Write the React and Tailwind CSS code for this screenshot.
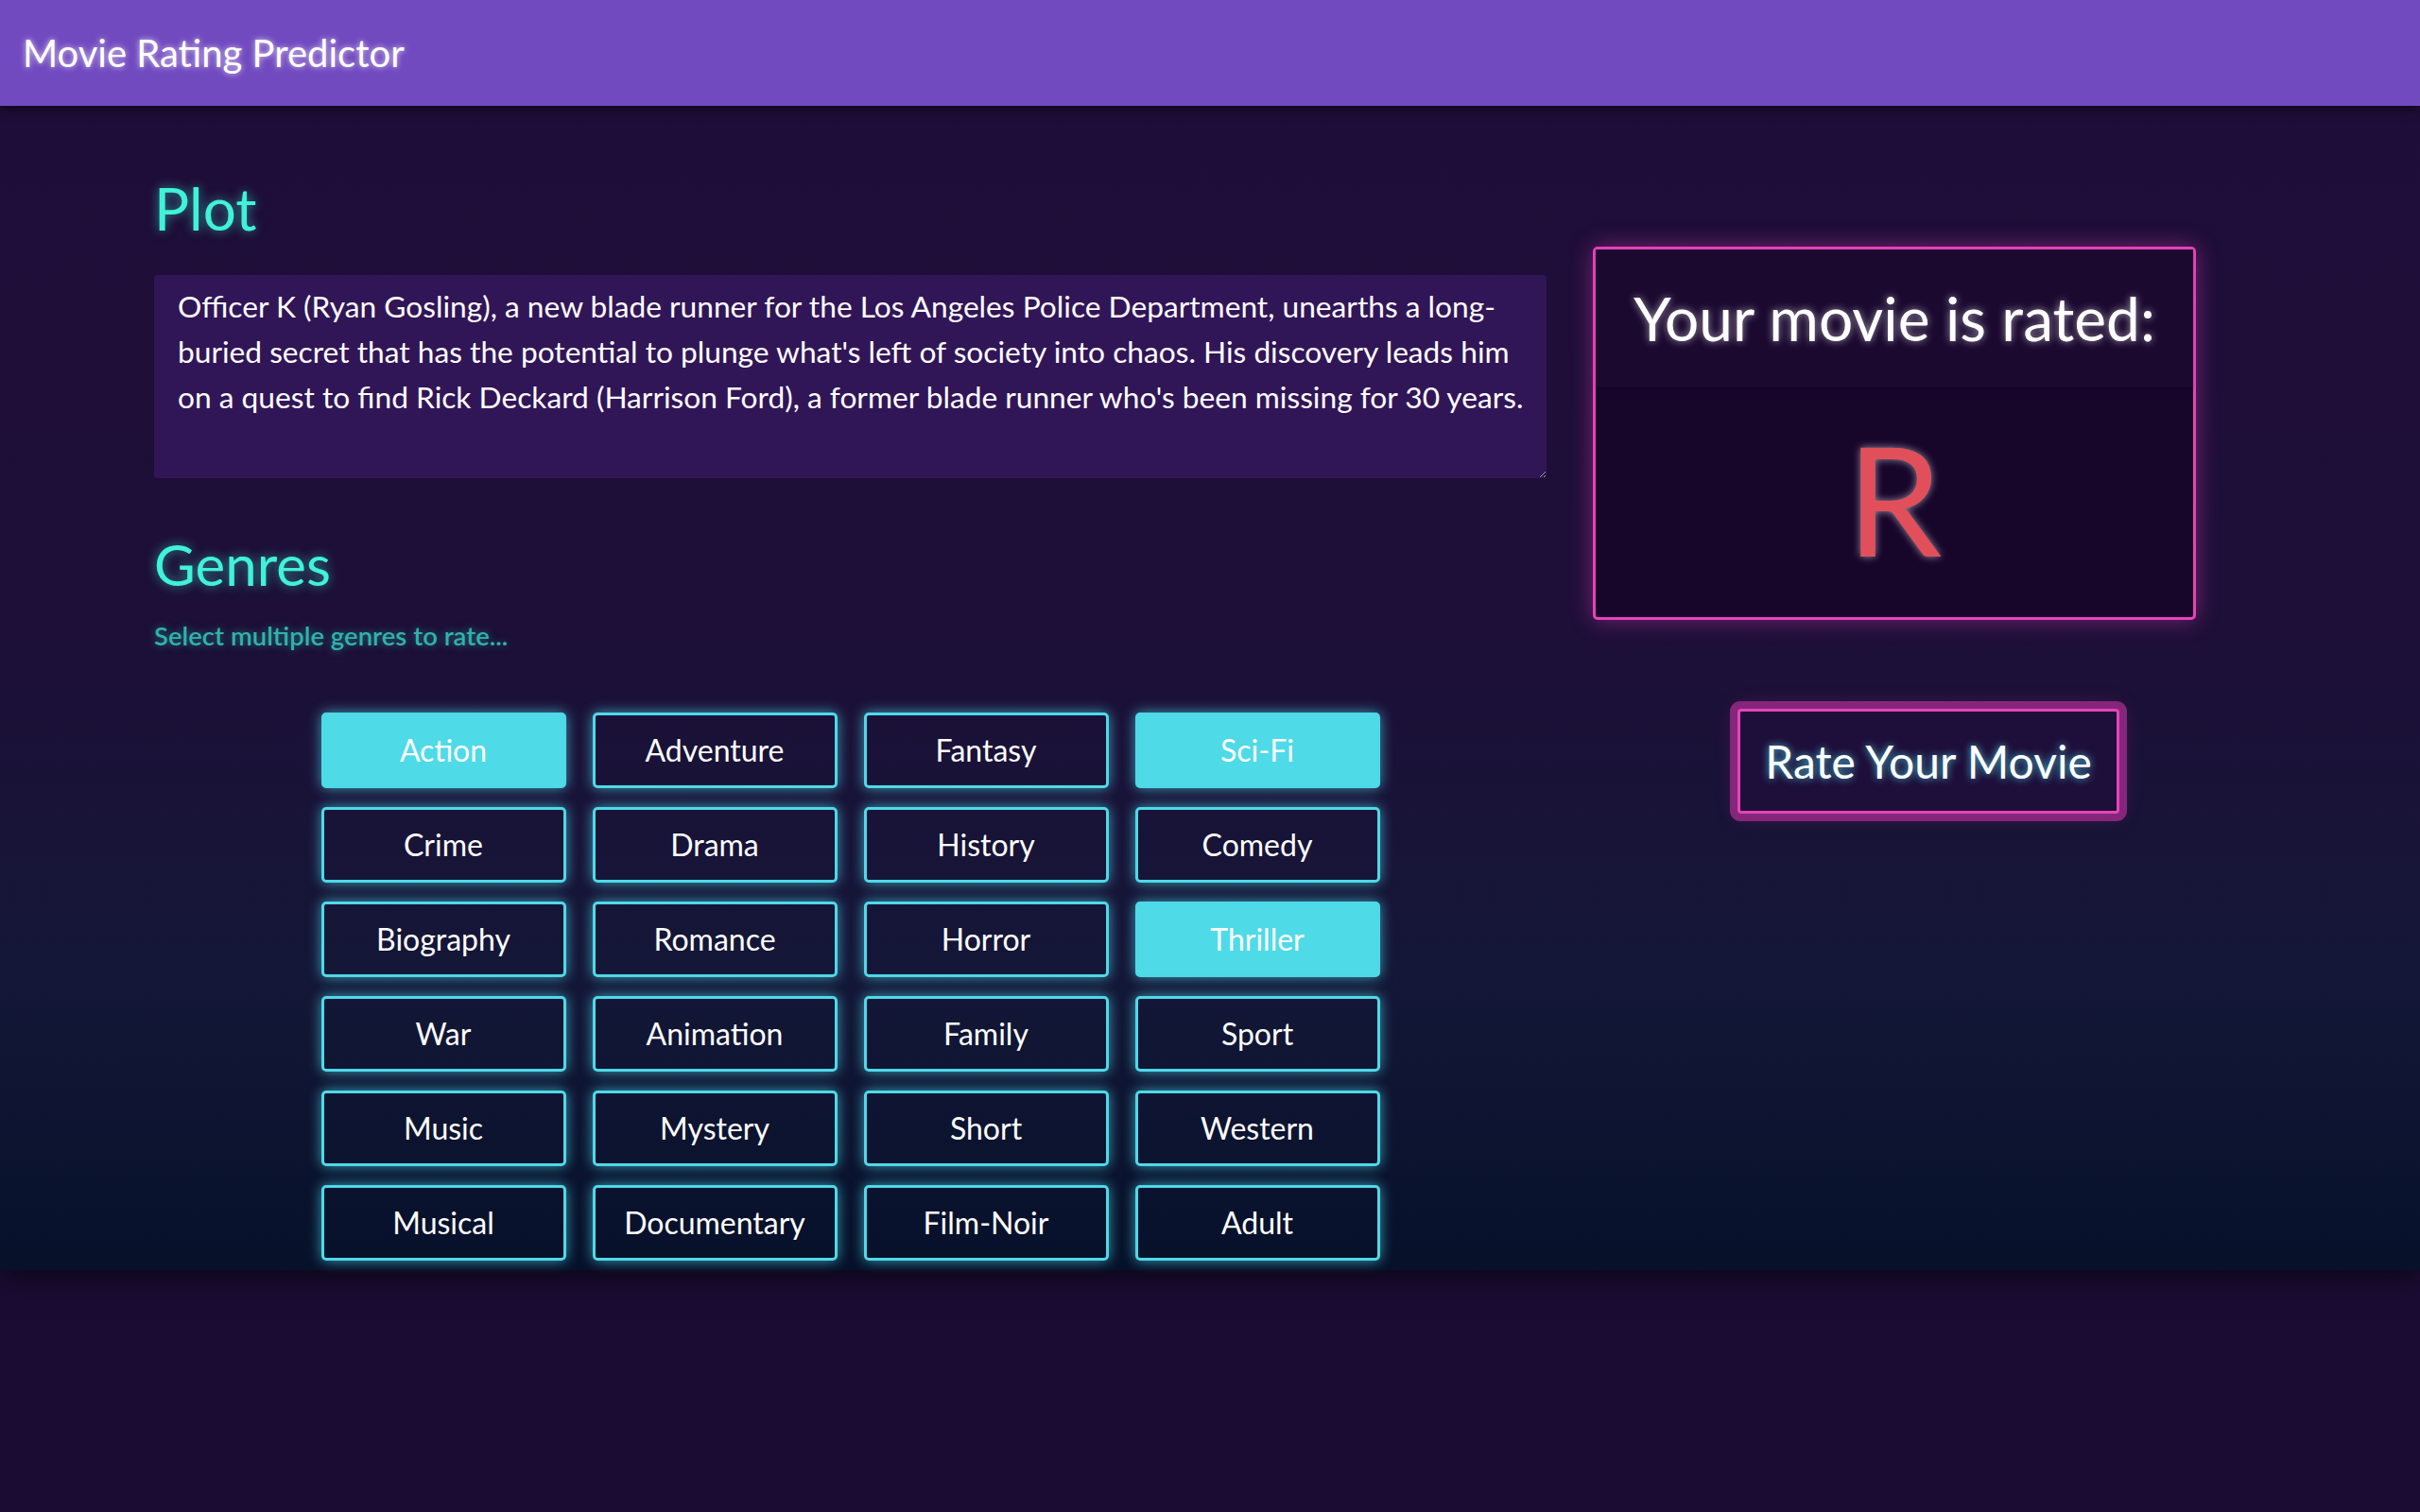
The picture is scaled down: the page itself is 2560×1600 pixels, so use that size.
import React, { useState } from "react";

const GENRES = [
  "Action", "Adventure", "Fantasy", "Sci-Fi",
  "Crime", "Drama", "History", "Comedy",
  "Biography", "Romance", "Horror", "Thriller",
  "War", "Animation", "Family", "Sport",
  "Music", "Mystery", "Short", "Western",
  "Musical", "Documentary", "Film-Noir", "Adult",
];

const PLOT =
  "Officer K (Ryan Gosling), a new blade runner for the Los Angeles Police Department, unearths a long-buried secret that has the potential to plunge what's left of society into chaos. His discovery leads him on a quest to find Rick Deckard (Harrison Ford), a former blade runner who's been missing for 30 years.";

export default function App() {
  const [selected, setSelected] = useState(["Action", "Sci-Fi", "Thriller"]);
  const toggle = (g) =>
    setSelected((s) => (s.includes(g) ? s.filter((x) => x !== g) : [...s, g]));

  return (
    <div className="min-h-screen bg-[#1b0c33] font-['Lato','Noto_Sans',sans-serif] text-white">
      <header className="relative z-20 h-[112px] bg-[#714ac0] flex items-center px-[24px] shadow-[0_3px_10px_rgba(0,0,0,0.55)]">
        <h1 className="text-[40px] leading-none font-normal text-white [text-shadow:0_0_6px_rgba(255,255,255,0.75)]">
          Movie Rating Predictor
        </h1>
      </header>

      <main className="relative z-10 flex pl-[163px] pt-[78px] pb-[10px] bg-[linear-gradient(to_bottom,#1e0d38_0%,#1d0f38_45%,#141737_75%,#06112a_100%)] shadow-[0_8px_30px_rgba(0,0,0,0.55)]">
        <section className="w-[1473px] flex flex-col">
          <h2 className="h-[60px] text-[62px] leading-[60px] font-normal text-[#3ff2d8] [text-shadow:0_0_12px_rgba(63,242,216,0.6)]">
            Plot
          </h2>
          <textarea
            defaultValue={PLOT}
            className="mt-[41px] w-full h-[215px] rounded-[4px] bg-[#311657] text-white text-[31.7px] leading-[48px] pl-[25px] pr-[12px] pt-[9px] pb-[10px] outline-none resize-y"
          />
          <h2 className="mt-[61px] h-[60px] text-[60px] leading-none font-normal text-[#3ff2d8] [text-shadow:0_0_12px_rgba(63,242,216,0.6)]">
            Genres
          </h2>
          <p className="mt-[32px] text-[27.5px] leading-none font-semibold text-[#2fb3a8] [text-shadow:0_0_8px_rgba(47,179,168,0.6)]">
            Select multiple genres to rate...
          </p>
          <div className="mt-[67px] grid grid-cols-[repeat(4,259px)] justify-center gap-x-[28px] gap-y-[20px]">
            {GENRES.map((g) => {
              const on = selected.includes(g);
              return (
                <button
                  key={g}
                  onClick={() => toggle(g)}
                  className={
                    "h-[80px] rounded-[5px] border-[3px] border-[#4ed9e8] text-[32px] leading-none text-white flex items-center justify-center shadow-[0_0_14px_rgba(78,217,232,0.7)] " +
                    (on ? "bg-[#4fdae8]" : "bg-transparent")
                  }
                >
                  {g}
                </button>
              );
            })}
          </div>
        </section>

        <aside className="ml-[49px] w-[638px] flex flex-col items-start">
          <div className="mt-[71px] w-[638px] h-[395px] border-[3px] border-[#e941b9] rounded-[5px] bg-[#17052a] flex flex-col shadow-[0_0_24px_rgba(233,65,185,0.45)]">
            <div className="h-[146px] flex items-center justify-center bg-[#1b0930] shadow-[0_1px_2px_rgba(0,0,0,0.15)]">
              <span className="text-[64px] leading-none text-white [text-shadow:0_0_8px_rgba(255,255,255,0.6)]">
                Your movie is rated:
              </span>
            </div>
            <div className="flex-1 flex items-center justify-center pb-[10px]">
              <span className="text-[161px] leading-none text-[#e1505a] [text-shadow:0_0_8px_rgba(255,255,255,0.55)]">
                R
              </span>
            </div>
          </div>
          <button className="mt-[94px] ml-[153px] w-[404px] h-[111px] rounded-[4px] border-[3px] border-[#e445b8] bg-[#1e0e3a] flex items-center justify-center shadow-[0_0_0_8px_#85267a,0_0_24px_rgba(233,65,185,0.25)]">
            <span className="text-[48px] leading-none text-white [text-shadow:0_0_8px_rgba(78,217,232,0.9)]">
              Rate Your Movie
            </span>
          </button>
        </aside>
      </main>
    </div>
  );
}
